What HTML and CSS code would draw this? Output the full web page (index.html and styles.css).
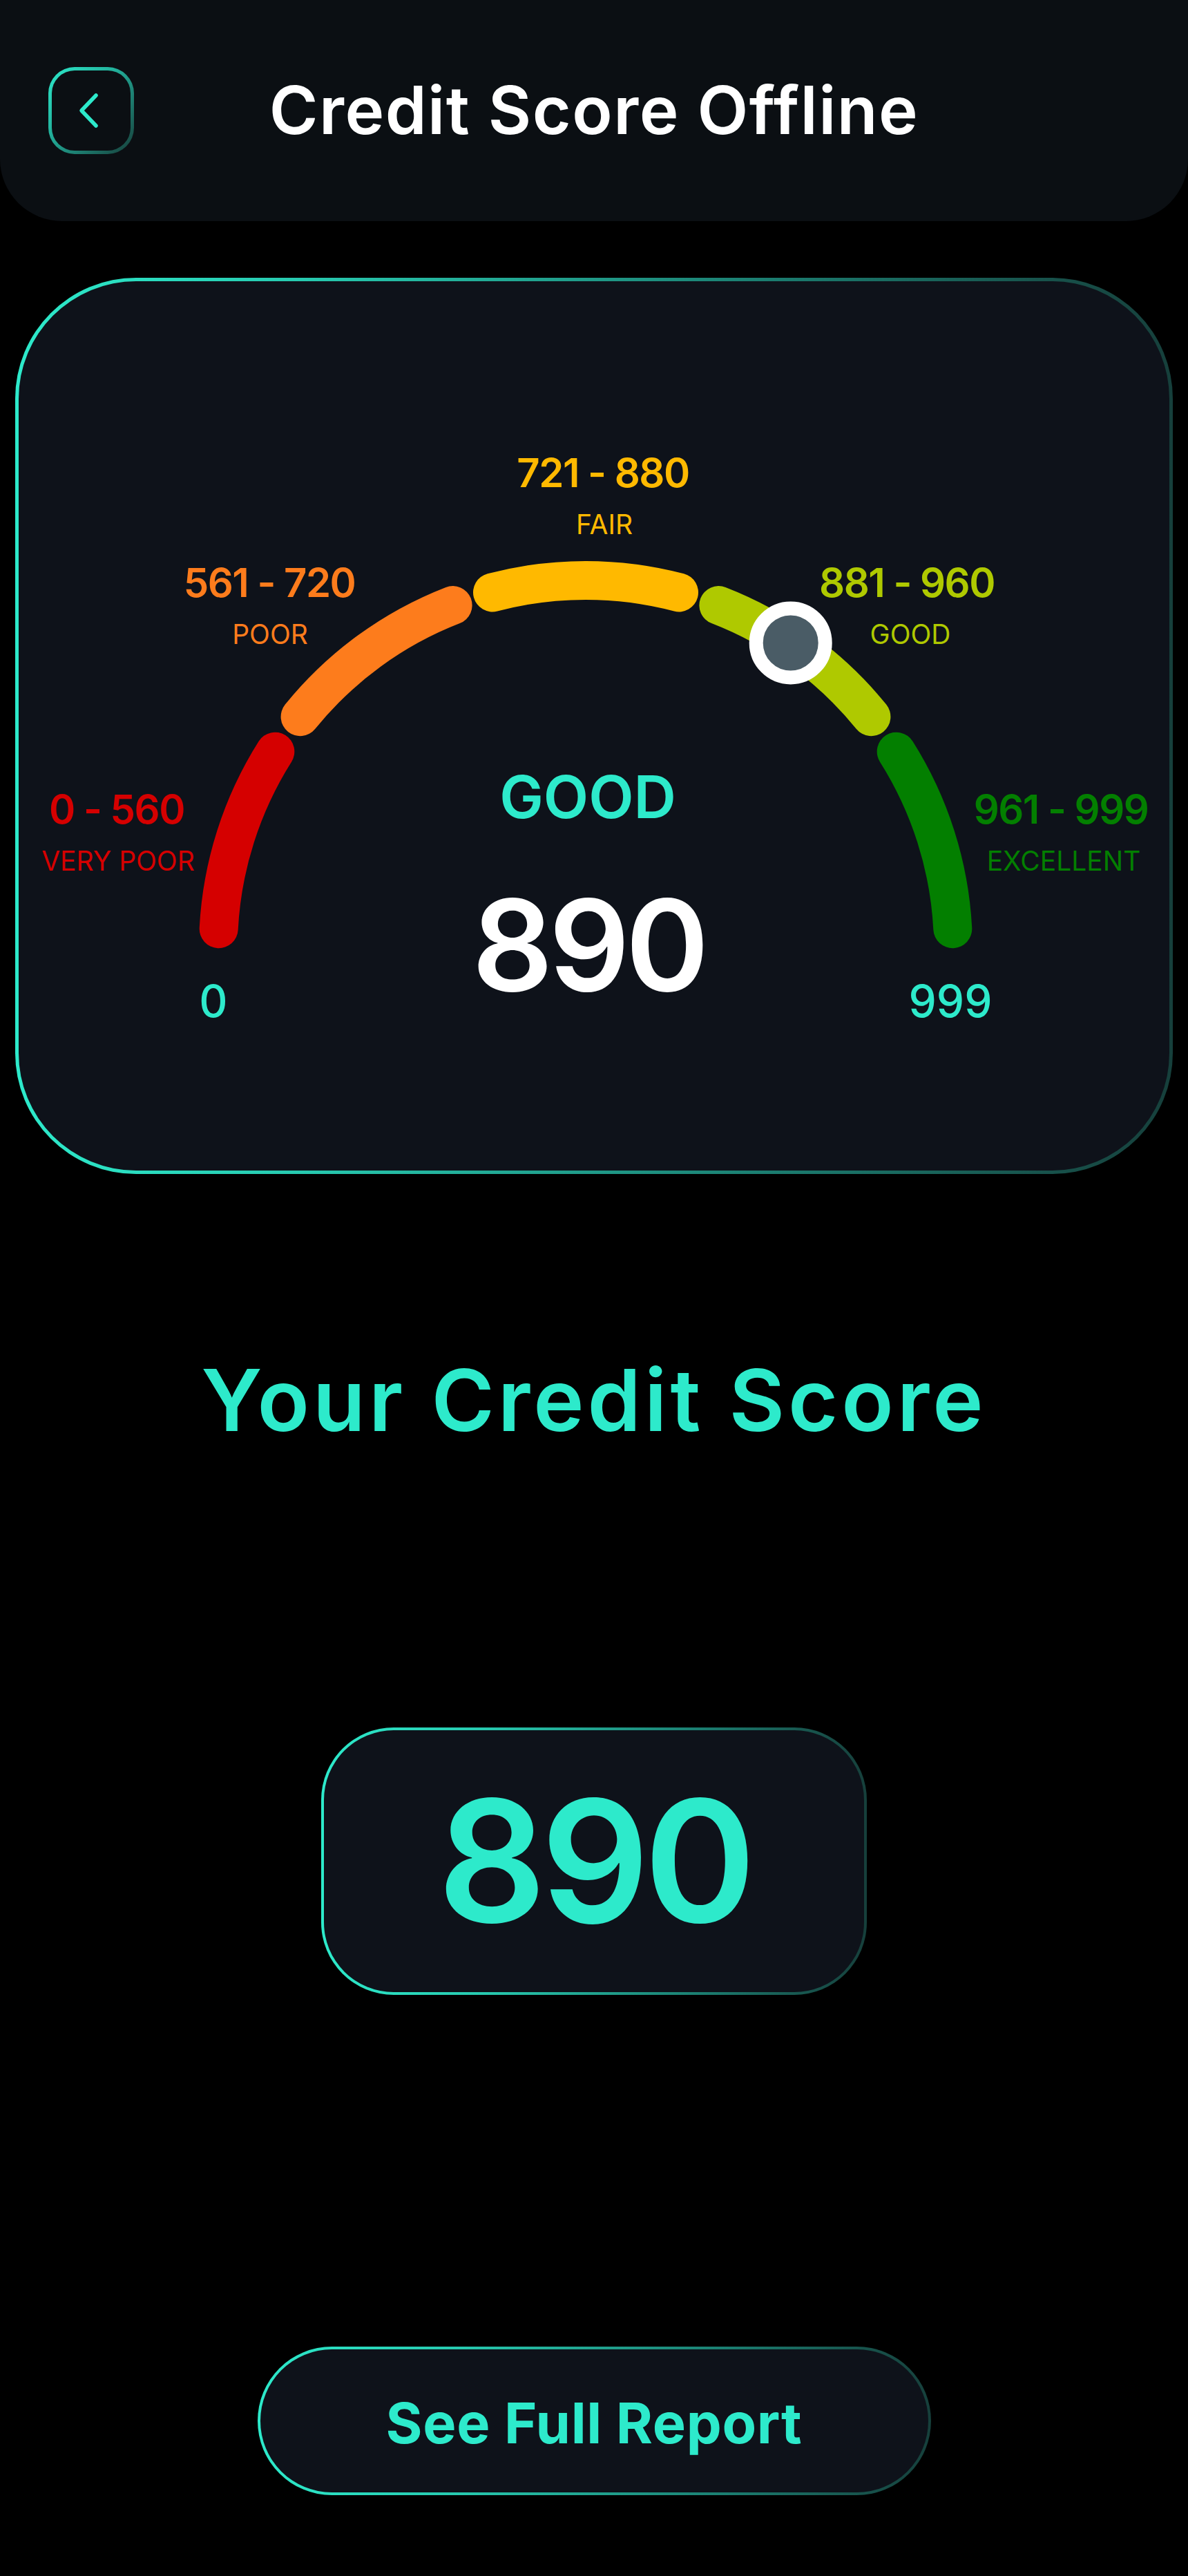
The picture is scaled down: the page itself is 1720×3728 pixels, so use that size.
FILE: index.html
```html
<!DOCTYPE html>
<html lang="en">
<head>
<meta charset="utf-8">
<title>Credit Score Offline</title>
<link rel="stylesheet" href="styles.css">
</head>
<body>
<div class="page">
  <header class="header">
    <button class="back" aria-label="Back">
      <svg class="back-icon" width="32" height="52" viewBox="0 0 32 52"><polyline points="26,4 5,26 26,48"/></svg>
    </button>
    <h1 class="title">Credit Score Offline</h1>
    <span class="header-spacer"></span>
  </header>

  <section class="gauge-card">
    <svg class="gauge" viewBox="27 407 1666 1287" preserveAspectRatio="none">
      <path class="arc arc-red" d="M316.7 1344.2 A532 532 0 0 1 398.3 1087.7"/>
      <path class="arc arc-orange" d="M434.6 1037.2 A532 532 0 0 1 655.6 876.0"/>
      <path class="arc arc-yellow" d="M713.0 857.4 A532 532 0 0 1 983.0 857.4"/>
      <path class="arc arc-lime" d="M1040.4 876.0 A532 532 0 0 1 1261.4 1037.2"/>
      <path class="arc arc-green" d="M1297.7 1087.7 A532 532 0 0 1 1379.3 1344.2"/>
      <circle class="marker" cx="1144.7" cy="930.4" r="50"/>

      <text class="rng t-yellow" x="873" y="705">721 - 880</text>
      <text class="cat t-yellow" x="875" y="773">FAIR</text>
      <text class="rng t-orange" x="390" y="864">561 - 720</text>
      <text class="cat t-orange" x="391" y="932">POOR</text>
      <text class="rng t-lime" x="1313" y="864">881 - 960</text>
      <text class="cat t-lime" x="1318" y="932">GOOD</text>
      <text class="rng t-red" x="169" y="1192">0 - 560</text>
      <text class="cat t-red" x="171" y="1260">VERY POOR</text>
      <text class="rng t-green" x="1536" y="1192">961 - 999</text>
      <text class="cat t-green" x="1540" y="1260">EXCELLENT</text>
      <text class="end" x="309" y="1472">0</text>
      <text class="end" x="1376" y="1472">999</text>
      <text class="status" x="851" y="1184">GOOD</text>
      <text class="value" x="852" y="1434">890</text>
    </svg>
  </section>

  <h2 class="score-heading">Your Credit Score</h2>

  <div class="score-box">
    <span class="score-value">890</span>
  </div>

  <button class="report-btn">See Full Report</button>
</div>
</body>
</html>
```

FILE: styles.css
```css
* {
  box-sizing: border-box;
}

html, body {
  margin: 0;
  padding: 0;
  background: #000;
}

body {
  font-family: Inter, "Noto Sans", "Liberation Sans", sans-serif;
  color: #fff;
}

.page {
  width: 1720px;
  min-height: 3728px;
  display: flex;
  flex-direction: column;
  align-items: center;
}

/* Header */
.header {
  align-self: stretch;
  height: 320px;
  background: #0b0f13;
  border-radius: 0 0 90px 90px;
  display: grid;
  grid-template-columns: 124px 1fr 124px;
  align-items: center;
  padding: 0 70px;
}

.back {
  width: 124px;
  height: 126px;
  padding: 0;
  border: 5px solid transparent;
  border-radius: 38px;
  background:
    linear-gradient(#0b0f13, #0b0f13) padding-box,
    linear-gradient(135deg, #2deacb 0%, #22b09b 40%, #173d39 100%) border-box;
  display: flex;
  align-items: center;
  justify-content: center;
  cursor: pointer;
}

.back-icon {
  display: block;
  margin-right: 6px;
}

.back-icon polyline {
  fill: none;
  stroke: #2deacb;
  stroke-width: 5.5;
  stroke-linecap: round;
  stroke-linejoin: round;
}

.title {
  margin: 0;
  text-align: center;
  font-size: 96px;
  line-height: 1.2;
  font-weight: 600;
  color: #fff;
  letter-spacing: 1.5px;
}

/* Gauge card */
.gauge-card {
  align-self: stretch;
  margin: 82px 22px 0;
  height: 1297px;
  border: 5px solid transparent;
  border-radius: 175px;
  background:
    linear-gradient(#0e121a, #0e121a) padding-box,
    linear-gradient(90deg, #2deacb 0%, #27c9af 25%, #1b7d70 65%, #163f3b 100%) border-box;
}

.gauge {
  display: block;
  width: 100%;
  height: 100%;
}

.arc {
  fill: none;
  stroke-width: 56;
  stroke-linecap: round;
}

.arc-red { stroke: #d50000; }
.arc-orange { stroke: #fd7c1c; }
.arc-yellow { stroke: #ffb900; }
.arc-lime { stroke: #afc900; }
.arc-green { stroke: #037f00; }

.marker {
  fill: #4a5c66;
  stroke: #fff;
  stroke-width: 20;
}

.gauge text {
  text-anchor: middle;
  font-family: Inter, "Noto Sans", "Liberation Sans", sans-serif;
}

.rng {
  font-size: 58px;
  font-weight: 600;
  letter-spacing: -1.5px;
}

.cat {
  font-size: 39px;
  font-weight: 400;
}

.t-yellow { fill: #ffb900; }
.t-orange { fill: #fd7c1c; }
.t-lime { fill: #afc900; }
.t-red { fill: #d50000; }
.t-green { fill: #037f00; }

.end {
  font-size: 64px;
  font-weight: 500;
  fill: #2deacb;
}

.status {
  font-size: 85px;
  font-weight: 600;
  fill: #2deacb;
}

.value {
  font-size: 183px;
  font-weight: 600;
  fill: #fff;
  letter-spacing: -6px;
}

/* Score heading */
.score-heading {
  margin: 253px 0 0;
  font-size: 124px;
  line-height: 1.2;
  font-weight: 600;
  color: #2deacb;
  letter-spacing: 5px;
}

/* Score box */
.score-box {
  margin-top: 399px;
  width: 790px;
  height: 387px;
  border: 4px solid transparent;
  border-radius: 105px;
  background:
    linear-gradient(#0e121a, #0e121a) padding-box,
    linear-gradient(90deg, #2deacb 0%, #27c9af 30%, #1b7d70 70%, #163f3b 100%) border-box;
  display: flex;
  align-items: center;
  justify-content: center;
}

.score-value {
  font-size: 246px;
  line-height: 1;
  font-weight: 600;
  color: #2deacb;
  letter-spacing: -8px;
}

/* Report button */
.report-btn {
  margin-top: 509px;
  width: 975px;
  height: 215px;
  padding: 8px 0 0;
  border: 4px solid transparent;
  border-radius: 108px;
  background:
    linear-gradient(#0e121a, #0e121a) padding-box,
    linear-gradient(90deg, #2deacb 0%, #27c9af 30%, #1b7d70 70%, #163f3b 100%) border-box;
  font-family: Inter, "Noto Sans", "Liberation Sans", sans-serif;
  font-size: 81px;
  line-height: 1;
  font-weight: 700;
  color: #2deacb;
  letter-spacing: 0.7px;
  display: flex;
  align-items: center;
  justify-content: center;
  cursor: pointer;
}
```
